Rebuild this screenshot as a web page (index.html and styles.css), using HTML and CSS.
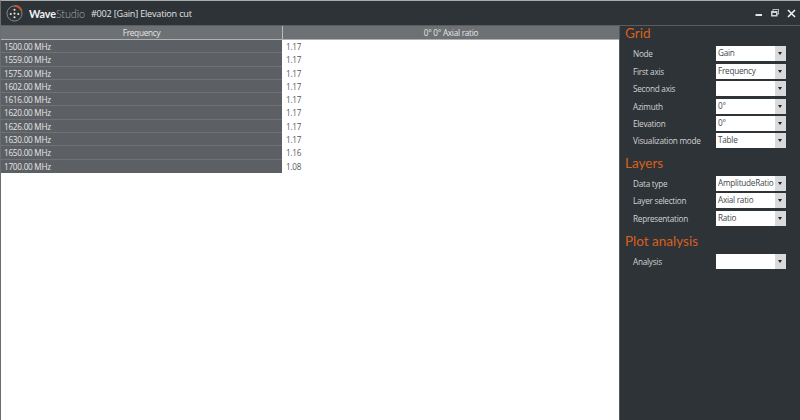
FILE: index.html
```html
<!DOCTYPE html>
<html lang="en">
<head>
<meta charset="utf-8">
<title>WaveStudio</title>
<link rel="stylesheet" href="styles.css">
</head>
<body>
<div class="window">
  <header class="titlebar">
    <svg class="logo" width="17" height="17" viewBox="0 0 18 18">
      <circle cx="9" cy="9" r="8" fill="none" stroke="#8b8f92" stroke-width="1"/>
      <path d="M9 1A8 8 0 0 1 16.5 6" fill="none" stroke="#c8552a" stroke-width="2.2"/>
      <circle cx="9" cy="5" r="1.1" fill="#e8e8e8"/>
      <circle cx="5" cy="9.5" r="1.1" fill="#e8e8e8"/>
      <circle cx="13" cy="9.5" r="1.1" fill="#e8e8e8"/>
      <circle cx="9" cy="9" r="1.1" fill="#e8e8e8"/>
      <circle cx="9" cy="13" r="1.1" fill="#e8e8e8"/>
    </svg>
    <span class="brand"><b>Wave</b><span class="brand-light">Studio</span></span>
    <span class="doc">#002 [Gain] Elevation cut</span>
    <div class="controls">
      <svg width="8" height="8" viewBox="0 0 8 8"><rect x="0.5" y="5" width="6.5" height="2" fill="#e4e4e4"/></svg>
      <svg width="8" height="8" viewBox="0 0 8 8"><rect x="2" y="0.5" width="5.5" height="4.5" fill="none" stroke="#b5b7b9"/><rect x="0.5" y="2.5" width="5.5" height="4.5" fill="#d0d0d0" stroke="#d0d0d0"/><rect x="1.5" y="4" width="3.5" height="2" fill="#2e3338"/></svg>
      <svg width="9" height="9" viewBox="0 0 9 9"><path d="M1 1L8 8M8 1L1 8" stroke="#f0f0f0" stroke-width="1.6"/></svg>
    </div>
  </header>
  <div class="main">
    <section class="table-area">
      <div class="thead">
        <div class="th th-first">Frequency</div>
        <div class="th">0° 0° Axial ratio</div>
      </div>
      <div class="row"><div class="key">1500.00 MHz</div><div class="val">1.17</div></div>
      <div class="row"><div class="key">1559.00 MHz</div><div class="val">1.17</div></div>
      <div class="row"><div class="key">1575.00 MHz</div><div class="val">1.17</div></div>
      <div class="row"><div class="key">1602.00 MHz</div><div class="val">1.17</div></div>
      <div class="row"><div class="key">1616.00 MHz</div><div class="val">1.17</div></div>
      <div class="row"><div class="key">1620.00 MHz</div><div class="val">1.17</div></div>
      <div class="row"><div class="key">1626.00 MHz</div><div class="val">1.17</div></div>
      <div class="row"><div class="key">1630.00 MHz</div><div class="val">1.17</div></div>
      <div class="row"><div class="key">1650.00 MHz</div><div class="val">1.16</div></div>
      <div class="row"><div class="key">1700.00 MHz</div><div class="val">1.08</div></div>
    </section>
    <aside class="panel">
      <h2 class="heading">Grid</h2>
      <div class="field"><span>Node</span><div class="select"><span class="sel-text">Gain</span><i class="arrow"></i></div></div>
      <div class="field"><span>First axis</span><div class="select"><span class="sel-text">Frequency</span><i class="arrow"></i></div></div>
      <div class="field"><span>Second axis</span><div class="select"><span class="sel-text"></span><i class="arrow"></i></div></div>
      <div class="field"><span>Azimuth</span><div class="select"><span class="sel-text">0°</span><i class="arrow"></i></div></div>
      <div class="field"><span>Elevation</span><div class="select"><span class="sel-text">0°</span><i class="arrow"></i></div></div>
      <div class="field"><span>Visualization mode</span><div class="select"><span class="sel-text">Table</span><i class="arrow"></i></div></div>
      <h2 class="heading heading-next">Layers</h2>
      <div class="field"><span>Data type</span><div class="select"><span class="sel-text">AmplitudeRatio</span><i class="arrow"></i></div></div>
      <div class="field"><span>Layer selection</span><div class="select"><span class="sel-text">Axial ratio</span><i class="arrow"></i></div></div>
      <div class="field"><span>Representation</span><div class="select"><span class="sel-text">Ratio</span><i class="arrow"></i></div></div>
      <h2 class="heading heading-plot">Plot analysis</h2>
      <div class="field"><span>Analysis</span><div class="select"><span class="sel-text"></span><i class="arrow"></i></div></div>
    </aside>
  </div>
</div>
</body>
</html>
```

FILE: styles.css
```css
* { box-sizing: border-box; }
html, body { margin: 0; height: 100%; }
body { font-family: "Open Sans", "Noto Sans", sans-serif; font-size: 8.2px; letter-spacing: -0.25px; overflow: hidden; }
.window { width: 800px; height: 420px; display: flex; flex-direction: column; background: #2e3338; border-top: 1px solid #a9abad; border-left: 1px solid #6b6e71; }
.titlebar { height: 25px; flex: none; display: flex; align-items: center; padding-left: 5px; color: #e6e6e6; border-bottom: 1px solid #5a5e62; }
.logo { flex: none; }
.brand { margin-left: 6px; font-family: "Lato", sans-serif; font-size: 10.8px; letter-spacing: -0.1px; color: #f2f2f2; }
.brand b { font-weight: 700; }
.brand-light { font-weight: 300; color: #a8abad; }
.doc { margin-left: 6px; font-size: 9.1px; letter-spacing: -0.2px; color: #e2e2e2; }
.controls { margin-left: auto; display: flex; align-items: center; gap: 8px; padding-right: 4px; }
.main { flex: 1; display: flex; min-height: 0; }
.table-area { flex: 1; background: #fff; color: #44484b; }
.thead { display: flex; height: 14px; background: #6d7174; color: #e6e6e6; border-bottom: 1px solid #b0b3b5; }
.th { flex: 1; text-align: center; line-height: 13px; }
.th-first { flex: none; width: 282px; border-right: 1px solid #b8babc; }
.row { display: flex; height: 13.3px; line-height: 13px; }
.key { width: 281px; flex: none; padding-left: 3px; background: #5c6064; color: #e6e6e6; border-bottom: 1px solid #6f7376; }
.row:last-child .key { border-bottom: 0; }
.val { padding-left: 4px; color: #55595c; }
.panel { width: 181px; flex: none; background: #2e3338; color: #d0d2d3; border-left: 1px solid #55595d; padding: 0 14px 0 13px; }
.heading { margin: 0 0 4px -8px; font-family: "Lato", sans-serif; font-size: 13.5px; letter-spacing: 0; font-weight: 400; line-height: 15px; color: #d9601c; }
.heading-next { margin-top: 6px; }
.heading-plot { margin-top: 7px; }
.field { display: flex; align-items: center; justify-content: space-between; height: 17.45px; }
.select { width: 70px; height: 15px; display: flex; background: #fff; color: #44484b; }
.sel-text { flex: 1; min-width: 0; padding-left: 2px; line-height: 14px; white-space: nowrap; overflow: hidden; }
.arrow { width: 11px; flex: none; background: #d9dadb; position: relative; }
.arrow::after { content: ""; position: absolute; left: 3px; top: 6px; border: 2.5px solid transparent; border-top: 3px solid #222; border-bottom: 0; }
```
